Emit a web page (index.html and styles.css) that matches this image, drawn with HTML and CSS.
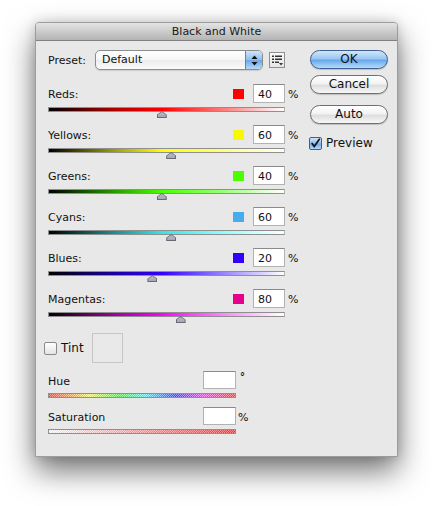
FILE: index.html
```html
<!DOCTYPE html>
<html>
<head>
<meta charset="utf-8">
<link rel="stylesheet" href="styles.css">
</head>
<body>
<div class="page">
  <div class="dialog">
    <div class="titlebar">Black and White</div>
    <div class="content">
      <div class="main">
        <div class="preset-row">
          <span class="preset-label">Preset:</span>
          <div class="popup">
            <span class="popup-text">Default</span>
            <span class="popup-arrows">
              <svg width="7" height="11" viewBox="0 0 7 11"><path d="M3.5 0.5 L6.5 4 L0.5 4 Z M3.5 10.5 L6.5 7 L0.5 7 Z" fill="#111"/></svg>
            </span>
          </div>
          <span class="menu-btn">
            <svg width="14" height="14" viewBox="0 0 14 14">
              <rect x="2" y="2.5" width="2" height="1.5" fill="#333"/>
              <rect x="5" y="2.5" width="7" height="1.5" fill="#333"/>
              <rect x="2" y="5.5" width="2" height="1.5" fill="#333"/>
              <rect x="5" y="5.5" width="7" height="1.5" fill="#333"/>
              <rect x="2" y="8.5" width="2" height="1.5" fill="#333"/>
              <rect x="5" y="8.5" width="4" height="1.5" fill="#333"/>
              <path d="M9 10 L13 10 L11 12.5 Z" fill="#333"/>
            </svg>
          </span>
        </div>

        <div class="channels">
          <div class="channel">
            <div class="channel-head">
              <span class="label">Reds:</span>
              <span class="swatch sw-red"></span>
              <span class="field">40</span>
              <span class="unit">%</span>
            </div>
            <div class="slider bar-red"><span class="thumb" style="left:48%"></span></div>
          </div>
          <div class="channel">
            <div class="channel-head">
              <span class="label">Yellows:</span>
              <span class="swatch sw-yellow"></span>
              <span class="field">60</span>
              <span class="unit">%</span>
            </div>
            <div class="slider bar-yellow"><span class="thumb" style="left:52%"></span></div>
          </div>
          <div class="channel">
            <div class="channel-head">
              <span class="label">Greens:</span>
              <span class="swatch sw-green"></span>
              <span class="field">40</span>
              <span class="unit">%</span>
            </div>
            <div class="slider bar-green"><span class="thumb" style="left:48%"></span></div>
          </div>
          <div class="channel">
            <div class="channel-head">
              <span class="label">Cyans:</span>
              <span class="swatch sw-cyan"></span>
              <span class="field">60</span>
              <span class="unit">%</span>
            </div>
            <div class="slider bar-cyan"><span class="thumb" style="left:52%"></span></div>
          </div>
          <div class="channel">
            <div class="channel-head">
              <span class="label">Blues:</span>
              <span class="swatch sw-blue"></span>
              <span class="field">20</span>
              <span class="unit">%</span>
            </div>
            <div class="slider bar-blue"><span class="thumb" style="left:44%"></span></div>
          </div>
          <div class="channel">
            <div class="channel-head">
              <span class="label">Magentas:</span>
              <span class="swatch sw-magenta"></span>
              <span class="field">80</span>
              <span class="unit">%</span>
            </div>
            <div class="slider bar-magenta"><span class="thumb" style="left:56%"></span></div>
          </div>
        </div>

        <div class="tint-row">
          <span class="checkbox"></span>
          <span class="tint-label">Tint</span>
          <span class="tint-box"></span>
        </div>

        <div class="hs">
          <div class="hs-group">
            <div class="hs-head">
              <span class="hs-label">Hue</span>
              <span class="field hs-field"></span>
              <span class="hs-unit deg">°</span>
            </div>
            <div class="hs-bar bar-hue"></div>
          </div>
          <div class="hs-group sat">
            <div class="hs-head">
              <span class="hs-label">Saturation</span>
              <span class="field hs-field"></span>
              <span class="hs-unit">%</span>
            </div>
            <div class="hs-bar bar-sat"></div>
          </div>
        </div>
      </div>

      <div class="side">
        <div class="btn btn-default">OK</div>
        <div class="btn btn-cancel">Cancel</div>
        <div class="btn btn-auto">Auto</div>
        <div class="preview-row">
          <span class="checkbox checked">
            <svg width="13" height="13" viewBox="0 0 13 13"><path d="M2.5 6.5 L5 10 L11 1.5" stroke="#111" stroke-width="2" fill="none" stroke-linecap="round"/></svg>
          </span>
          <span>Preview</span>
        </div>
      </div>
    </div>
  </div>
</div>
</body>
</html>
```

FILE: styles.css
```css
* { box-sizing: border-box; }
html, body { margin: 0; padding: 0; background: #fff; }
body {
  font-family: "DejaVu Sans", "Lucida Grande", sans-serif;
  font-size: 11px;
  color: #111;
}
.page { padding: 22px 0 0 35px; min-height: 506px; }

.dialog {
  width: 363px;
  height: 435px;
  background: #e8e8e8;
  border: 1px solid #9c9c9c;
  border-radius: 4px 4px 0 0;
  box-shadow: 0 14px 30px rgba(0,0,0,0.55), 0 0 12px rgba(0,0,0,0.15);
  display: flex;
  flex-direction: column;
}

.titlebar {
  height: 18px;
  line-height: 17px;
  text-align: center;
  background: linear-gradient(#e4e4e4, #b4b4b4);
  border-bottom: 1px solid #808080;
  border-radius: 3px 3px 0 0;
  color: #1a1a1a;
}

.content {
  display: flex;
  gap: 14px;
  padding: 9px 0 0 12px;
}

.main { width: 248px; display: flex; flex-direction: column; }

/* preset row */
.preset-row { display: flex; align-items: center; height: 20px; }
.preset-label { width: 47px; }
.popup {
  width: 168px;
  height: 20px;
  display: flex;
  border: 1px solid #8d8d8d;
  border-radius: 5px;
  background: linear-gradient(#ffffff, #f6f6f6 50%, #ececec 51%, #fbfbfb);
  box-shadow: 0 1px 1px rgba(0,0,0,0.12);
  overflow: hidden;
}
.popup-text { flex: 1; padding-left: 6px; line-height: 18px; }
.popup-arrows {
  width: 17px;
  display: flex;
  align-items: center;
  justify-content: center;
  border-left: 1px solid #5c86b8;
  background: linear-gradient(#cfe4fa, #91c0f0 48%, #6ea6e4 52%, #b2dafc);
}
.menu-btn {
  margin-left: 6px;
  width: 16px;
  height: 16px;
  border: 1px solid #8f8f8f;
  background: linear-gradient(#fbfbfb, #e6e6e6);
  display: flex;
  align-items: center;
  justify-content: center;
}

/* channels */
.channels { margin-top: 14px; display: flex; flex-direction: column; gap: 13px; }
.channel { display: flex; flex-direction: column; }
.channel-head { display: flex; align-items: center; height: 19px; }
.label { flex: 1; padding-top: 2px; }
.swatch { width: 11px; height: 10px; margin-right: 9px; }
.sw-red { background: #ff0000; }
.sw-yellow { background: #f8f800; }
.sw-green { background: #4cff00; }
.sw-cyan { background: #45acee; }
.sw-blue { background: #3300ff; }
.sw-magenta { background: #e6008c; }

.field {
  width: 32px;
  height: 19px;
  background: #fff;
  border: 1px solid #b2b2b2;
  border-top-color: #8a8a8a;
  padding: 2px 0 0 4px;
  line-height: 15px;
}
.unit { width: 8px; margin-left: 3px; padding-top: 2px; white-space: nowrap; }

.slider {
  position: relative;
  margin-top: 4px;
  width: 237px;
  height: 5px;
  border: 1px solid #8f8f8f;
  border-right-color: #b5b5b5;
}
.bar-red { background: linear-gradient(to right, #000, #b00000 28%, #ff0000 48%, #ff8080 75%, #fff); }
.bar-yellow { background: linear-gradient(to right, #000, #a0a000 28%, #ffff00 48%, #ffff80 75%, #fff); }
.bar-green { background: linear-gradient(to right, #000, #2a9a00 28%, #48ff00 48%, #a0ff80 75%, #fff); }
.bar-cyan { background: linear-gradient(to right, #000, #1f8f8f 28%, #35e6e6 48%, #90ffff 75%, #fff); }
.bar-blue { background: linear-gradient(to right, #000, #1a00a0 28%, #3300ff 48%, #9a88ff 75%, #fff); }
.bar-magenta { background: linear-gradient(to right, #000, #a000a0 28%, #ff00ff 48%, #ff88ff 75%, #fff); }

.thumb {
  position: absolute;
  top: 3px;
  width: 10px;
  height: 7px;
  transform: translateX(-50%);
  background: #6a6a74;
  clip-path: polygon(50% 0, 100% 55%, 100% 100%, 0 100%, 0 55%);
}
.thumb::after {
  content: "";
  position: absolute;
  left: 1px; right: 1px; top: 1px; bottom: 1px;
  background: linear-gradient(#b9bcc6, #a4a8b4);
  clip-path: polygon(50% 0, 100% 55%, 100% 100%, 0 100%, 0 55%);
}

/* tint */
.tint-row { margin-top: 16px; height: 30px; display: flex; align-items: center; }
.checkbox {
  width: 13px;
  height: 13px;
  border: 1px solid #8a8a8a;
  border-radius: 2px;
  background: linear-gradient(#ffffff, #e4e4e4);
  display: flex;
  align-items: center;
  justify-content: center;
}
.tint-row .checkbox { margin-left: -4px; }
.tint-label { margin-left: 4px; width: 31px; font-size: 12px; }
.tint-box {
  width: 31px;
  height: 30px;
  border: 1px solid #c6c6c6;
  background: #e9e9e9;
}

/* hue / saturation */
.hs { margin-top: 8px; display: flex; flex-direction: column; }
.hs-group { display: flex; flex-direction: column; }
.hs-group.sat { margin-top: 9px; }
.hs-head { display: flex; align-items: center; height: 18px; }
.hs-label { width: 155px; padding-top: 2px; }
.hs-field { width: 33px; height: 18px; }
.hs-unit { margin-left: 2px; padding-top: 2px; }
.hs-unit.deg { align-self: flex-start; padding-top: 0; margin-left: 4px; font-size: 10px; font-weight: bold; }
.hs-bar {
  margin-top: 4px;
  width: 188px;
  height: 5px;
  border: 1px solid #8f8f8f;
}
.bar-hue {
  background:
    repeating-conic-gradient(rgba(255,255,255,0.5) 0 25%, rgba(150,150,150,0.25) 0 50%) 0 0 / 2px 2px,
    linear-gradient(to right, #ff3030, #ffff30 22%, #30ff30 38%, #30ffff 52%, #3030ff 68%, #ff30ff 83%, #ff3030);
}
.bar-sat {
  background:
    repeating-conic-gradient(rgba(255,255,255,0.45) 0 25%, rgba(150,150,150,0.2) 0 50%) 0 0 / 2px 2px,
    linear-gradient(to right, #ffffff, #ff2020);
}

/* side buttons */
.side { width: 78px; display: flex; flex-direction: column; }
.btn {
  height: 19px;
  line-height: 17px;
  text-align: center;
  border-radius: 10px;
  border: 1px solid #6e6e6e;
  background: linear-gradient(#ffffff, #f3f3f3 45%, #dedede 55%, #f7f7f7);
  box-shadow: 0 1px 1px rgba(0,0,0,0.18);
  font-size: 12px;
}
.btn-default {
  border-color: #3e5f90;
  background: linear-gradient(#d3e7fb, #98c6f3 45%, #6aa8ea 55%, #b4dcfd);
}
.btn-cancel { margin-top: 6px; }
.btn-auto { margin-top: 11px; }
.preview-row {
  margin-top: 12px;
  display: flex;
  align-items: center;
  gap: 4px;
  margin-left: -1px;
  font-size: 12px;
}
.checkbox.checked {
  border-color: #3e5f90;
  background: linear-gradient(#cfe4fa, #8fbff0 48%, #6ea6e4 52%, #b2dafc);
}
```
